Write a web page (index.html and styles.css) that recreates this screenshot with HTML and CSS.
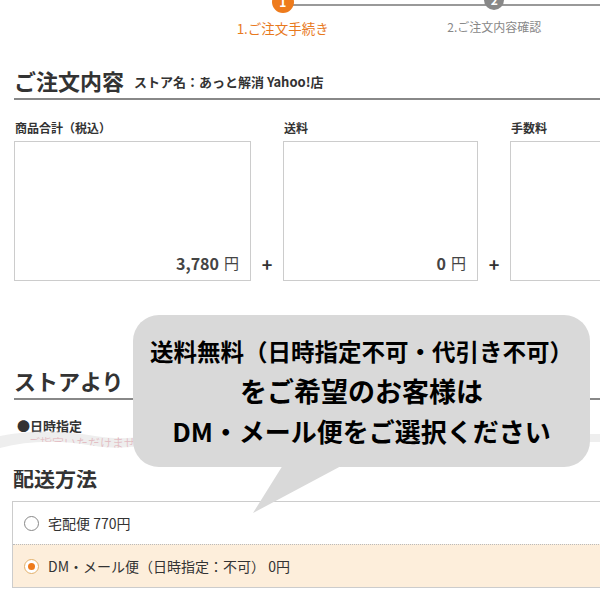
FILE: index.html
```html
<!DOCTYPE html>
<html lang="ja">
<head>
    <meta charset="UTF-8">
    <meta name="viewport" content="width=device-width, initial-scale=1.0">
    <title>ご注文手続き</title>
    <link rel="stylesheet" href="styles.css">
</head>
<body>

    <div class="page">

        <!-- progress steps -->
        <div class="steps">
            <div class="step current">
                <span class="dot">1</span>
                <span class="step-label">1.ご注文手続き</span>
            </div>
            <div class="step">
                <span class="dot">2</span>
                <span class="step-label">2.ご注文内容確認</span>
            </div>
        </div>

        <section class="order">
            <h2 class="sec-title">ご注文内容<span class="store">ストア名：あっと解消 Yahoo!店</span></h2>

            <div class="totals">
                <div class="total first">
                    <p class="total-label">商品合計（税込）</p>
                    <div class="total-box"><span class="amount">3,780</span> 円</div>
                </div>
                <span class="plus">+</span>
                <div class="total second">
                    <p class="total-label">送料</p>
                    <div class="total-box"><span class="amount">0</span> 円</div>
                </div>
                <span class="plus">+</span>
                <div class="total third">
                    <p class="total-label">手数料</p>
                    <div class="total-box"></div>
                </div>
            </div>
        </section>

        <section class="from-store">
            <h2 class="sec-title thin">ストアより</h2>
            <p class="note-title">●日時指定</p>
            <p class="note-red">ご指定いただけません。ペ</p>
        </section>

        <section class="delivery">
            <h2 class="delivery-title">配送方法</h2>
            <ul class="options">
                <li class="option">
                    <span class="radio"></span>
                    宅配便 770円
                </li>
                <li class="option selected">
                    <span class="radio"></span>
                    DM・メール便（日時指定：不可） 0円
                </li>
            </ul>
        </section>

        <!-- torn edge between sections -->
        <svg class="tear" width="600" height="40" viewBox="0 0 600 40">
            <path d="M0 6 C30 0 60 0 95 6 C120 10 140 8 160 4 L600 4 L600 40 L0 40 Z" fill="rgba(234,234,234,0.8)"/>
            <path d="M0 18 C30 10 60 10 95 16 C120 20 140 16 160 12 L600 12 L600 40 L0 40 Z" fill="#fff"/>
        </svg>

        <div class="bubble">
            <p class="bubble-l1">送料無料（日時指定不可・代引き不可）</p>
            <p class="bubble-l2">をご希望のお客様は</p>
            <p class="bubble-l3">DM・メール便をご選択ください</p>
        </div>

    </div>

</body>
</html>
```

FILE: styles.css
```css
/* base */
body {
    margin: 0;
    padding: 0;
    background: #fff;
    color: #333;
    font-family: "Noto Sans CJK JP", "Noto Sans", sans-serif;
    overflow: hidden;
}

p, h2, ul {
    margin: 0;
    padding: 0;
}

.page {
    position: relative;
    width: 600px;
    height: 600px;
    overflow: hidden;
}

/* steps */
.steps {
    position: relative;
    display: flex;
    padding-left: 177px;
    height: 40px;
}

.steps::before {
    content: "";
    position: absolute;
    top: 4px;
    left: 283px;
    right: 0;
    height: 2px;
    background: #999;
}

.step {
    position: relative;
    width: 212px;
    display: flex;
    flex-direction: column;
    align-items: center;
}

.dot {
    width: 20px;
    height: 20px;
    margin-top: -10px;
    border-radius: 50%;
    background: #888;
    color: #fff;
    font-size: 12px;
    font-weight: bold;
    line-height: 20px;
    text-align: center;
}

.step.current .dot {
    width: 22px;
    height: 22px;
    margin-top: -9px;
    background: #ee7b1c;
    line-height: 22px;
}

.step-label {
    margin-top: 8px;
    font-size: 12px;
    line-height: 18px;
    color: #888;
}

.step.current .step-label {
    margin-top: 6px;
    font-size: 13.5px;
    color: #e8791d;
}

/* section headings */
.sec-title {
    font-size: 22px;
    font-weight: bold;
    line-height: 30px;
    padding-bottom: 1px;
    border-bottom: 2px solid #888;
}

.order {
    margin: 25px 0 0 14px;
}

.store {
    margin-left: 10px;
    font-size: 13px;
    vertical-align: 3px;
}

/* totals */
.totals {
    display: flex;
    align-items: flex-end;
    margin-top: 20px;
}

.total,
.plus {
    flex-shrink: 0;
}

.total-label {
    font-size: 12px;
    font-weight: bold;
    line-height: 16px;
    margin-bottom: 5px;
    padding-left: 1px;
}

.total-box {
    height: 131px;
    border: 1px solid #ccc;
    display: flex;
    justify-content: flex-end;
    align-items: flex-end;
    padding: 0 11px 7px 0;
    font-size: 15px;
    line-height: 20px;
    color: #444;
}

.first .total-box { width: 224px; }
.second .total-box { width: 182px; }
.third .total-box { width: 200px; }

.amount {
    font-weight: bold;
    font-size: 16px;
    margin-right: 5px;
}

.plus {
    width: 32px;
    text-align: center;
    font-size: 18px;
    font-weight: bold;
    line-height: 20px;
    padding-bottom: 7px;
}

/* from store */
.from-store {
    margin: 84px 0 0 14px;
}

.sec-title.thin {
    font-weight: 600;
    padding-bottom: 3px;
}

.note-title {
    margin-top: 17px;
    padding-left: 3px;
    font-size: 13px;
    font-weight: bold;
    line-height: 18px;
}

.note-red {
    padding-left: 14px;
    font-size: 12px;
    line-height: 16px;
    color: #c8102e;
}

/* delivery */
.delivery {
    margin: 11px 0 0 12px;
}

.delivery-title {
    font-size: 21px;
    font-weight: bold;
    line-height: 30px;
    padding-left: 1px;
    margin-bottom: 9px;
}

.options {
    list-style: none;
    width: 620px;
    border: 1px solid #ccc;
}

.option {
    display: flex;
    align-items: center;
    height: 42px;
    padding-left: 11px;
    font-size: 14px;
    color: #333;
}

.option + .option {
    border-top: 1px dotted #bbb;
}

.option.selected {
    background: #fdeedb;
}

.radio {
    width: 13px;
    height: 13px;
    margin-right: 9px;
    border: 1px solid #888;
    border-radius: 50%;
    background: #fff;
    display: flex;
    align-items: center;
    justify-content: center;
}

.option.selected .radio {
    border-color: #e3b06a;
}

.option.selected .radio::after {
    content: "";
    width: 7px;
    height: 7px;
    border-radius: 50%;
    background: #ee7b1c;
}

/* overlays */
.tear {
    position: absolute;
    left: 0;
    top: 430px;
}

.bubble {
    position: absolute;
    left: 133px;
    top: 315px;
    width: 457px;
    height: 152px;
    border-radius: 26px;
    background: #d9d9d9;
    color: #000;
    font-weight: bold;
    text-align: center;
}

.bubble::after {
    content: "";
    position: absolute;
    left: 120px;
    top: 150px;
    width: 90px;
    height: 48px;
    background: #d9d9d9;
    clip-path: polygon(33.3% 0, 100% 0, 0 100%);
}

.bubble-l1 {
    margin-top: 21px;
    font-size: 23.5px;
    line-height: 30px;
}

.bubble-l2 {
    margin-top: 8px;
    font-size: 27px;
    line-height: 34px;
}

.bubble-l3 {
    margin-top: 6px;
    font-size: 26px;
    line-height: 34px;
}
```
